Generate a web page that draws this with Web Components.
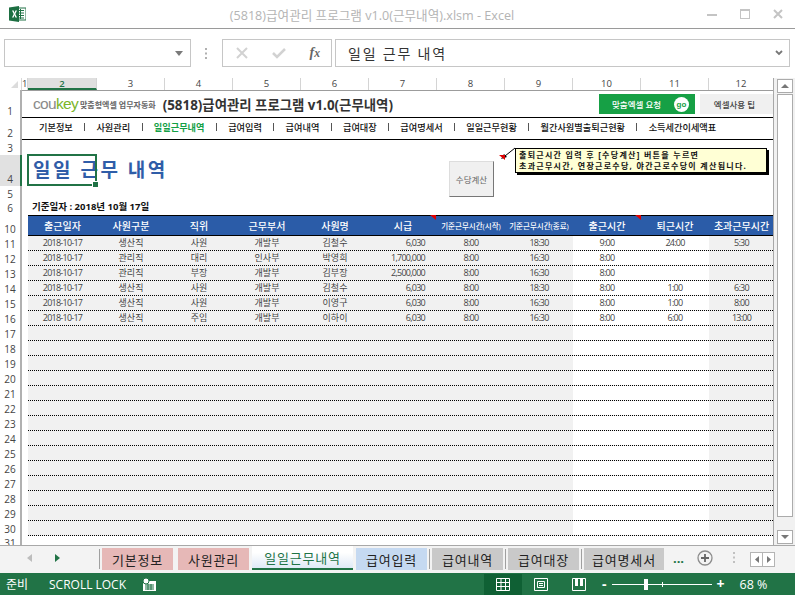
<!DOCTYPE html>
<html lang="ko">
<head>
<meta charset="utf-8">
<title>급여관리 프로그램</title>
<style>
  html, body { margin: 0; padding: 0; background: #fff; overflow: hidden; }
  body { font-family: "Open Sans", "Noto Sans CJK KR", sans-serif; }
</style>
</head>
<body>
<xl-app>
  <xl-titlebar slot="top">(5818)급여관리 프로그램 v1.0(근무내역).xlsm - Excel</xl-titlebar>
  <xl-formula slot="top">일일 근무 내역</xl-formula>
  <xl-sheet></xl-sheet>
  <xl-scrollbar slot="side"></xl-scrollbar>
  <xl-tabs slot="bottom">
    <xl-tab color="#e6b8b7" width="71">기본정보</xl-tab>
    <xl-tab color="#e6b8b7" width="71" gap="5">사원관리</xl-tab>
    <xl-tab active width="101">일일근무내역</xl-tab>
    <xl-tab color="#c5d9f1" width="71">급여입력</xl-tab>
    <xl-tab color="#c9c9c9" width="71" sep>급여내역</xl-tab>
    <xl-tab color="#c9c9c9" width="71" sep>급여대장</xl-tab>
    <xl-tab color="#c9c9c9" width="80" sep>급여명세서</xl-tab>
  </xl-tabs>
  <xl-status slot="bottom"></xl-status>
</xl-app>

<script>
const FONT = '"Open Sans", "Noto Sans CJK KR", sans-serif';

class XlApp extends HTMLElement {
  constructor() {
    super();
    this.attachShadow({ mode: "open" }).innerHTML = `
      <style>
        :host { display: flex; flex-direction: column; width: 795px; height: 595px; overflow: hidden; background: #fff; font-family: ${FONT}; }
        .middle { display: flex; height: 467px; background: #f1f1f1; }
      </style>
      <slot name="top"></slot>
      <div class="middle"><slot></slot><slot name="side"></slot></div>
      <slot name="bottom"></slot>`;
  }
}

class XlTitlebar extends HTMLElement {
  constructor() {
    super();
    this.attachShadow({ mode: "open" }).innerHTML = `
      <style>
        :host { display: flex; align-items: center; height: 28px; border-bottom: 1px solid #9a9a9a; box-sizing: content-box; padding: 0 12px 0 9px; }
        .name { flex: 1; text-align: center; color: #b4b4b4; font-size: 12.600px; padding-left: 11px; white-space: nowrap; }
        .win { display: flex; gap: 23px; align-items: center; }
        svg { display: block; }
      </style>
      <svg width="17" height="16" viewBox="0 0 17 16">
        <rect x="6" y="2" width="11" height="12" fill="#fff" stroke="#217346"/>
        <path d="M9 4.500h6M9 7h6M9 9.500h6M9 12h6M11.500 3v10" stroke="#217346" stroke-width="1"/>
        <path d="M0 1.500 10 0v16L0 14.500z" fill="#1d6f42"/>
        <path d="M3 4.500h1.700L5.500 7l.9-2.500H8L6.300 8 8 11.500H6.400L5.500 9l-.9 2.500H3L4.700 8z" fill="#fff"/>
      </svg>
      <div class="name"><slot></slot></div>
      <div class="win">
        <svg width="10" height="10" viewBox="0 0 10 10"><rect y="5" width="10" height="2" fill="#c4c4c4"/></svg>
        <svg width="10" height="10" viewBox="0 0 10 10"><rect x=".5" y=".5" width="9" height="9" fill="none" stroke="#c4c4c4"/><rect y="0" width="10" height="2" fill="#c4c4c4"/></svg>
        <svg width="10" height="10" viewBox="0 0 10 10"><path d="M1 1l8 8M9 1l-8 8" stroke="#c4c4c4" stroke-width="2"/></svg>
      </div>`;
  }
}

class XlFormula extends HTMLElement {
  constructor() {
    super();
    this.attachShadow({ mode: "open" }).innerHTML = `
      <style>
        :host { display: flex; height: 49px; box-sizing: border-box; padding: 10px 5px 11px 4px; align-items: stretch; background: #fff; }
        .box { border: 1px solid #c6c6c6; box-sizing: border-box; display: flex; align-items: center; }
        .name { width: 187px; justify-content: flex-end; padding-right: 7px; }
        .dots { width: 31px; display: flex; align-items: center; justify-content: center; }
        .fx { width: 110px; padding: 0 11px 0 13px; justify-content: space-between; }
        .fx i { font: italic 700 14px "Liberation Serif", serif; color: #666; }
        .input { flex: 1; margin-left: 3px; padding: 0 6px 0 12px; justify-content: space-between; font-size: 14px; letter-spacing: 1.800px; color: #333; }
        svg { display: block; }
      </style>
      <div class="box name"><svg width="8" height="5" viewBox="0 0 8 5"><path d="M0 0h8L4 5z" fill="#7a7a7a"/></svg></div>
      <div class="dots"><svg width="3" height="11" viewBox="0 0 3 11"><path d="M0 0h2v2H0zM0 4.500h2v2H0zM0 9h2v2H0z" fill="#b0b0b0"/></svg></div>
      <div class="box fx">
        <svg width="12" height="12" viewBox="0 0 12 12"><path d="M1 1l10 10M11 1L1 11" stroke="#d2d2d2" stroke-width="2"/></svg>
        <svg width="14" height="12" viewBox="0 0 14 12"><path d="M1 6l4 4 8-8" fill="none" stroke="#d2d2d2" stroke-width="2.500"/></svg>
        <i>f<small>x</small></i>
      </div>
      <div class="box input"><span><slot></slot></span>
        <svg width="8" height="6" viewBox="0 0 8 6"><path d="M1 1l3 3 3-3" fill="none" stroke="#777" stroke-width="1.800"/></svg>
      </div>`;
  }
}

// sheet data, column 2 to 12
const DATA = [
  ["2018-10-17", "생산직", "사원", "개발부", "김철수", "6,030", "8:00", "18:30", "9:00", "24:00", "5:30"],
  ["2018-10-17", "관리직", "대리", "인사부", "박영희", "1,700,000", "8:00", "16:30", "8:00", "", ""],
  ["2018-10-17", "관리직", "부장", "개발부", "김부장", "2,500,000", "8:00", "16:30", "8:00", "", ""],
  ["2018-10-17", "생산직", "사원", "개발부", "김철수", "6,030", "8:00", "18:30", "8:00", "1:00", "6:30"],
  ["2018-10-17", "생산직", "사원", "개발부", "이영구", "6,030", "8:00", "16:30", "8:00", "1:00", "8:00"],
  ["2018-10-17", "생산직", "주임", "개발부", "이하이", "6,030", "8:00", "16:30", "8:00", "6:00", "13:00"],
];
const HEAD = ["출근일자", "사원구분", "직위", "근무부서", "사원명", "시급", "기준근무시간(시작)", "기준근무시간(종료)", "출근시간", "퇴근시간", "초과근무시간"];
const NAV = ["기본정보", "사원관리", "일일근무내역", "급여입력", "급여내역", "급여대장", "급여명세서", "일일근무현황", "월간사원별출퇴근현황", "소득세간이세액표"];

class XlSheet extends HTMLElement {
  constructor() {
    super();
    const colHeads = [1, 2, 3, 4, 5, 6, 7, 8, 9, 10, 11, 12]
      .map((n) => `<div class="ch${n === 2 ? " on" : ""}">${n}</div>`).join("");
    const rh = (n, h, on) => `<div class="rh${on ? " on" : ""}${n === 31 ? " cut" : ""}" style="height:${h}px">${n}</div>`;
    const head = HEAD.map((t, i) => `<div class="${i === 6 || i === 7 ? "mini" : ""}">${t}</div>`).join("");
    const cellClass = (i) => {
      const c = [];
      if (i === 0 || i >= 5) c.push("n");
      if (i === 5) c.push("num");
      if (i === 8 || i === 9) c.push("white");
      return c.join(" ");
    };
    let rows = "";
    for (let n = 11; n <= 30; n++) {
      const d = DATA[n - 11] || Array(11).fill("");
      rows += `<div class="row">${rh(n, 15)}<div class="body data">${d
        .map((t, i) => `<div class="${cellClass(i)}">${t}</div>`).join("")}</div></div>`;
    }
    this.attachShadow({ mode: "open" }).innerHTML = `
      <style>
        :host { display: block; position: relative; width: 773px; height: 467px; overflow: hidden; background: #fff; font-family: ${FONT}; box-sizing: content-box; border-right: 1px solid #a8a8a8; }
        .cols { display: grid; grid-template-columns: 22px 6px 69px repeat(9, 68px) 65px; height: 12px; background: #fff; }
        .corner { position: relative; border-right: 1px solid #d8d8d8; }
        .corner::after { content: ""; position: absolute; right: 3px; bottom: 2px; border-left: 7px solid transparent; border-bottom: 7px solid #dcdcdc; }
        .ch { border-right: 1px solid #d4d4d4; text-align: center; font-size: 9.500px; line-height: 12px; color: #444; overflow: hidden; }
        .ch.on { background: #dfdfdf; border-bottom: 2px solid #217346; height: 10px; color: #217346; font-weight: 600; }
        .row { display: flex; }
        .rh { flex: none; border-right: 2px solid #b0b0b0; box-sizing: border-box; width: 22px; font-size: 10px; color: #444; text-align: center; display: flex; align-items: flex-end; justify-content: center; line-height: 14px; overflow: hidden; }
        .rh.cut { align-items: flex-start; }
        .rh.on { background: #e1e1e1; border-right-color: #217346; }
        .body { flex: 1; min-width: 0; margin-left: 6px; box-sizing: border-box; }
        .top { height: 28px; border-top: 1px solid #9c9c9c; border-bottom: 1px solid #000; display: flex; align-items: center; box-sizing: border-box; padding: 0 0 0 11px; margin-left: 0; }
        .logo { font: 15.500px "Liberation Sans", sans-serif; letter-spacing: -.700px; color: #8a8a8a; }
        .logo b { color: #7ab52a; font-weight: 400; }
        .slogan { font-size: 8px; font-weight: 700; color: #666; margin: 0 7px 0 2px; white-space: nowrap; }
        .title { flex: 1; font-size: 13.400px; font-weight: 700; color: #333; white-space: nowrap; }
        .go { width: 96px; height: 20px; background: #16a045; color: #fff; font-size: 8.500px; font-weight: 500; display: flex; align-items: center; justify-content: space-between; box-sizing: border-box; padding: 0 6px 0 13px; margin-right: 5px; }
        .go i { width: 15px; height: 15px; border-radius: 50%; background: #fff; color: #16a045; font: 700 8px/15px "Liberation Sans", sans-serif; text-align: center; }
        .tip { width: 73px; height: 20px; background: #f0f0f0; color: #444; font-size: 8.500px; font-weight: 500; display: flex; align-items: center; justify-content: center; padding-right: 4px; box-sizing: border-box; }
        .nav { height: 22px; border-bottom: 1px solid #000; margin-left: 0; padding: 0 0 3px 17px; display: flex; align-items: center; gap: 11.300px; box-sizing: border-box; font-size: 9.200px; font-weight: 500; color: #111; white-space: nowrap; }
        .nav .cur { color: #13a045; font-weight: 700; }
        .nav s { width: 1px; height: 8px; background: #555; }
        .big { height: 31px; display: flex; align-items: center; padding: 0 0 3px 5px; font-size: 19px; font-weight: 700; letter-spacing: 2.500px; color: #2f5da8; white-space: nowrap; box-sizing: border-box; }
        .date { height: 14px; padding-left: 4px; font-size: 9.500px; font-weight: 700; color: #111; line-height: 12px; white-space: nowrap; }
        .head, .data { display: grid; grid-template-columns: 69px repeat(9, 68px) 65px; }
        .head { height: 21px; background: #2b5ca8; border-top: 1px solid #000; border-bottom: 1px solid #000; color: #fff; font-size: 10px; font-weight: 500; box-sizing: border-box; }
        .head div { display: flex; align-items: center; justify-content: center; white-space: nowrap; }
        .head .mini { font-size: 7.500px; }
        .data { height: 15px; border-bottom: 1px dotted #000; background: #f1f1f1; color: #444; font-size: 9px; line-height: 14px; text-align: center; }
        .data div { overflow: hidden; white-space: nowrap; }
        .data .n { letter-spacing: -.750px; }
        .data .num { text-align: right; padding-right: 12px; }
        .data .white { background: #fff; }
        .last { height: 9px; }
        /* things lying over the cells */
        .sel { position: absolute; left: 27px; top: 76px; width: 70px; height: 32px; border: 2px solid #217346; box-sizing: border-box; }
        .sel::after { content: ""; position: absolute; right: -4px; bottom: -4px; width: 5px; height: 5px; background: #217346; border: 1px solid #fff; }
        .btn { position: absolute; left: 449px; top: 83px; width: 45px; height: 36px; box-sizing: border-box; background: #f0f0f0; border-right: 1px solid #777; border-bottom: 1px solid #777; border-top: 1px solid #ddd; border-left: 1px solid #ddd; color: #666; font-size: 8.500px; display: flex; align-items: center; justify-content: center; }
        .note { position: absolute; left: 515px; top: 70px; width: 252px; height: 25px; box-sizing: border-box; background: #ffffd5; border: 1px solid #000; box-shadow: 2px 2px 0 #000; font-size: 8px; font-weight: 700; color: #111; line-height: 10.500px; padding: 1px 3px; letter-spacing: 1.280px; white-space: nowrap; }
        .flag { position: absolute; width: 0; height: 0; border-left: 6px solid transparent; border-top: 5px solid #e00000; }
        .leader { position: absolute; left: 500px; top: 69px; display: block; }
      </style>
      <div class="cols"><div class="corner"></div>${colHeads}</div>
      <div class="row">${rh(1, 28)}<div class="body top">
        <span class="logo">cou<b>key</b></span><span class="slogan">맞춤형엑셀 업무자동화</span>
        <span class="title">(5818)급여관리 프로그램 v1.0(근무내역)</span>
        <span class="go">맞춤엑셀 요청<i>go</i></span><span class="tip">엑셀사용 팁</span>
      </div></div>
      <div class="row">${rh(2, 22)}<div class="body nav">${NAV.map((t, i) =>
        `${i ? "<s></s>" : ""}<span class="${i === 2 ? "cur" : ""}">${t}</span>`).join("")}</div></div>
      <div class="row">${rh(3, 15)}</div>
      <div class="row">${rh(4, 31, true)}<div class="body big">일일 근무 내역</div></div>
      <div class="row">${rh(5, 15)}</div>
      <div class="row">${rh(6, 14)}<div class="body date">기준일자 : 2018년 10월 17일</div></div>
      <div class="row">${rh(10, 21)}<div class="body head">${head}</div></div>
      ${rows}
      <div class="row">${rh(31, 9)}<div class="body last"></div></div>
      <div class="sel"></div>
      <div class="btn">수당계산</div>
      <svg class="leader" width="16" height="16" viewBox="0 0 16 16"><path d="M15 1L5 9" stroke="#000"/><path d="M1 12l6-2-3-3z" fill="#000"/></svg>
      <div class="flag" style="left:499px;top:77px"></div>
      <div class="flag" style="left:430px;top:137px"></div>
      <div class="flag" style="left:635px;top:137px"></div>
      <div class="note">출퇴근시간 입력 후 [수당계산] 버튼을 누르면<br>초과근무시간, 연장근로수당, 야간근로수당이 계산됩니다.</div>`;
  }
}

class XlScrollbar extends HTMLElement {
  constructor() {
    super();
    this.attachShadow({ mode: "open" }).innerHTML = `
      <style>
        :host { display: flex; flex-direction: column; width: 16px; margin: 1px 2px 1px 3px; }
        .b { height: 14px; flex: none; background: #fff; border: 1px solid #ababab; box-sizing: border-box; display: flex; align-items: center; justify-content: center; }
        .thumb { height: 423px; flex: none; background: #fff; border: 1px solid #ababab; box-sizing: border-box; margin-top: 1px; }
        .track { flex: 1; }
        svg { display: block; }
      </style>
      <div class="b"><svg width="8" height="4" viewBox="0 0 8 4"><path d="M4 0l4 4H0z" fill="#777"/></svg></div>
      <div class="thumb"></div>
      <div class="track"></div>
      <div class="b"><svg width="8" height="4" viewBox="0 0 8 4"><path d="M0 0h8L4 4z" fill="#777"/></svg></div>`;
  }
}

class XlTab extends HTMLElement {
  constructor() {
    super();
    const active = this.hasAttribute("active");
    const color = this.getAttribute("color") || "#fff";
    this.attachShadow({ mode: "open" }).innerHTML = `
      <style>
        :host { display: flex; flex: none; align-items: flex-start; margin-left: ${this.getAttribute("gap") || 0}px; }
        .sep { width: 1px; height: 20px; background: #a0a0a0; margin: 3px 2px 0 2px; }
        .t { width: ${this.getAttribute("width")}px; height: 22px; margin-top: 2px; background: ${color}; color: #222; font-size: 13px; display: flex; align-items: center; justify-content: center; letter-spacing: .800px; white-space: nowrap; }
        .t.active { height: 24px; margin: 0 3px; box-sizing: border-box; padding-top: 0; background: linear-gradient(#fff 30%, #dfe9f6); border-bottom: 2px solid #217346; color: #217346; }
      </style>
      ${this.hasAttribute("sep") ? '<div class="sep"></div>' : ""}
      <div class="t${active ? " active" : ""}"><slot></slot></div>`;
  }
}

class XlTabs extends HTMLElement {
  constructor() {
    super();
    this.attachShadow({ mode: "open" }).innerHTML = `
      <style>
        :host { display: flex; height: 28px; box-sizing: border-box; border-top: 1px solid #a8a8a8; background: #f3f3f3; align-items: flex-start; }
        .nav { width: 99px; height: 24px; flex: none; display: flex; align-items: center; box-sizing: border-box; padding-left: 27px; gap: 22px; }
        .line { width: 1px; height: 20px; background: #a0a0a0; margin: 3px 2px 0 0; flex: none; }
        .tabs { display: flex; flex: none; }
        .more { color: #217346; font-weight: 700; font-size: 13px; width: 33px; flex: none; text-align: center; line-height: 24px; padding-right: 4px; box-sizing: border-box; }
        .plus { margin: 4px 20px 0 0; }
        .dots { margin: 6px 14px 0 0; }
        .scr { display: flex; margin-top: 6px; border: 1px solid #b4b4b4; background: #fff; }
        .scr div { width: 11px; height: 13px; display: flex; align-items: center; justify-content: center; }
        .scr div + div { border-left: 1px solid #b4b4b4; }
        svg { display: block; flex: none; }
      </style>
      <div class="nav">
        <svg width="6" height="8" viewBox="0 0 6 8"><path d="M5 0v8L0 4z" fill="#bdbdbd"/></svg>
        <svg width="6" height="8" viewBox="0 0 6 8"><path d="M0 0v8l5-4z" fill="#217346"/></svg>
      </div>
      <div class="line"></div>
      <div class="tabs"><slot></slot></div>
      <div class="more">...</div>
      <svg class="plus" width="16" height="16" viewBox="0 0 16 16"><circle cx="8" cy="8" r="7" fill="none" stroke="#8c8c8c" stroke-width="1.300"/><path d="M8 4v8M4 8h8" stroke="#666" stroke-width="1.800"/></svg>
      <svg class="dots" width="3" height="11" viewBox="0 0 3 11"><path d="M0 0h2v2H0zM0 4.500h2v2H0zM0 9h2v2H0z" fill="#c0c0c0"/></svg>
      <div class="scr">
        <div><svg width="4" height="7" viewBox="0 0 4 7"><path d="M4 0v7L0 3.500z" fill="#777"/></svg></div>
        <div><svg width="4" height="7" viewBox="0 0 4 7"><path d="M0 0v7l4-3.500z" fill="#777"/></svg></div>
      </div>`;
  }
}

class XlStatus extends HTMLElement {
  constructor() {
    super();
    this.attachShadow({ mode: "open" }).innerHTML = `
      <style>
        :host { display: flex; height: 22px; background: #217346; color: #fff; font-size: 12px; align-items: center; }
        .ready { margin-left: 6px; width: 43px; }
        .lock { width: 94px; }
        .view { width: 38px; height: 21px; margin-top: 1px; display: flex; align-items: center; justify-content: center; flex: none; }
        .view.on { background: #0f6034; margin-left: 328px; }
        .minus, .plus { font-weight: 700; font-size: 14px; line-height: 20px; }
        .slider { position: relative; width: 100px; height: 1px; background: #fff; margin: 0 5px; flex: none; }
        .slider::before { content: ""; position: absolute; left: 32px; top: -5px; width: 4px; height: 11px; background: #fff; }
        .slider::after { content: ""; position: absolute; left: 50px; top: -2px; width: 1px; height: 5px; background: #fff; }
        .pct { margin-left: 15px; font-size: 12.500px; white-space: nowrap; }
        svg { display: block; flex: none; }
      </style>
      <span class="ready">준비</span>
      <span class="lock">SCROLL LOCK</span>
      <svg width="13" height="13" viewBox="0 0 13 13"><path d="M0 3h13v10H0z" fill="#fff"/><circle cx="3" cy="3" r="3" fill="#fff" stroke="#217346"/><path d="M2 7h9M2 9h9M2 11h9M5 6v6M8 6v6" stroke="#217346"/></svg>
      <div class="view on"><svg width="14" height="13" viewBox="0 0 14 13"><path d="M.5.500h13v12H.5zM5 .5v12M9.500.5v12M.5 4.500h13M.5 8.500h13" fill="none" stroke="#fff"/></svg></div>
      <div class="view"><svg width="14" height="13" viewBox="0 0 14 13"><path d="M.5.500h13v12H.5z" fill="none" stroke="#fff"/><path d="M3.500 3.500h7v6h-7zM5 5.500h4M5 7.500h4" fill="none" stroke="#fff"/></svg></div>
      <div class="view"><svg width="14" height="13" viewBox="0 0 14 13"><path d="M.5.500h13v12H.5z" fill="none" stroke="#fff"/><path d="M3 1h3v7H3zM8 1h3v7H8z" fill="#fff"/></svg></div>
      <span class="minus" style="margin-left:4px">-</span><div class="slider"></div><span class="plus">+</span>
      <span class="pct">68 %</span>`;
  }
}

customElements.define("xl-app", XlApp);
customElements.define("xl-titlebar", XlTitlebar);
customElements.define("xl-formula", XlFormula);
customElements.define("xl-sheet", XlSheet);
customElements.define("xl-scrollbar", XlScrollbar);
customElements.define("xl-tab", XlTab);
customElements.define("xl-tabs", XlTabs);
customElements.define("xl-status", XlStatus);
</script>
</body>
</html>
